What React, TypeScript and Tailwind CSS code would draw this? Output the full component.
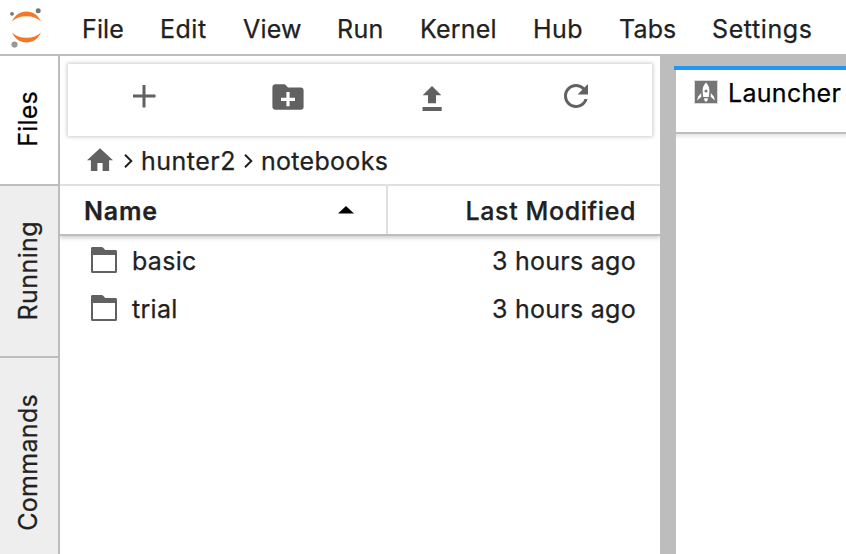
import type { ReactNode } from 'react';

const menus = [
  { label: 'File', cls: 'w-[78px] tracking-[0.15px]' },
  { label: 'Edit', cls: 'w-[83px] tracking-[0.5px]' },
  { label: 'View', cls: 'w-[94px] tracking-[0.2px]' },
  { label: 'Run', cls: 'w-[83px] tracking-[0.3px]' },
  { label: 'Kernel', cls: 'w-[113px] tracking-[0.2px]' },
  { label: 'Hub', cls: 'w-[86px] tracking-[0.4px]' },
  { label: 'Tabs', cls: 'w-[93px] tracking-[0.15px]' },
  { label: 'Settings', cls: 'w-[120px] tracking-[0.6px]' },
];

function Logo() {
  return (
    <svg className="h-[54px] w-[48px]" viewBox="0 0 48 54">
      <path d="M12 21.500C15 15 20 11.500 26.500 11.500S38 15 41 21.500C37.500 18 32.500 16.300 26.500 16.300S15.500 18 12 21.500Z" fill="#f37726" />
      <path d="M12 32.500C15 39 20 42.500 26.500 42.500S38 39 41 32.500C37.500 36 32.500 37.700 26.500 37.700S15.500 36 12 32.500Z" fill="#f37726" />
      <circle cx="38.200" cy="10.700" r="2.500" fill="#767677" />
      <circle cx="12" cy="13.800" r="1.900" fill="#767677" />
      <circle cx="14.500" cy="44.500" r="3.100" fill="#989798" />
    </svg>
  );
}

function ToolButton({ children }: { children: ReactNode }) {
  return <button className="flex h-[72px] w-[144px] items-start justify-center text-[#616161]">{children}</button>;
}

function Chevron() {
  return (
    <svg className="h-[16px] w-[10px] shrink-0" viewBox="0 0 10 16">
      <path d="M2 1.800L8.300 8L2 14.200" fill="none" stroke="#212121" strokeWidth="2" />
    </svg>
  );
}

function FolderIcon() {
  return (
    <svg className="mb-[2px] ml-[30px] h-[28px] w-[28px] shrink-0" viewBox="0 0 28 28">
      <path fillRule="evenodd" fill="#616161" d="M2.500 1H11.500C12.200 1 12.600 1.200 13 1.600L15.200 3.900H25.500C26.400 3.900 27 4.500 27 5.400V25.500C27 26.400 26.400 27 25.500 27H2.500C1.600 27 1 26.400 1 25.500V2.500C1 1.600 1.600 1 2.500 1ZM3 9V25.100H25V9Z" />
    </svg>
  );
}

function FileRow({ name }: { name: string }) {
  return (
    <div className="flex h-[48px] items-center">
      <FolderIcon />
      <span className="ml-[14px] tracking-[0.3px]">{name}</span>
      <span className="mr-[24px] ml-auto tracking-[0.28px]">3 hours ago</span>
    </div>
  );
}

function SideTab({ label, cls }: { label: string; cls: string }) {
  return (
    <div className={'flex w-[58px] items-center justify-center border-b-2 border-[#bdbdbd] pr-[3px] ' + cls}>
      <span className="rotate-180 [writing-mode:vertical-rl]">{label}</span>
    </div>
  );
}

export default function App() {
  return (
    <div className="flex h-[554px] w-[846px] flex-col overflow-hidden bg-white font-['Inter','Liberation_Sans',sans-serif] text-[25px] leading-[32px] whitespace-nowrap text-[#212121] [-webkit-text-stroke:0.25px_currentColor]">
      <header className="flex h-[56px] shrink-0 border-b-2 border-[#bdbdbd]">
        <Logo />
        <nav className="ml-[34px] flex pt-[13px]">
          {menus.map((m) => (
            <span key={m.label} className={'shrink-0 ' + m.cls}>{m.label}</span>
          ))}
        </nav>
      </header>

      <div className="flex min-h-0 flex-1">
        <aside className="w-[60px] shrink-0 border-r-2 border-[#bdbdbd] bg-[#eeeeee]">
          <SideTab label="Files" cls="h-[130px] bg-white pb-[2px] text-black tracking-[0.2px]" />
          <SideTab label="Running" cls="h-[172px] tracking-[0.4px]" />
          <SideTab label="Commands" cls="h-[211px] tracking-[0.3px]" />
        </aside>

        <section className="flex w-[600px] shrink-0 flex-col bg-white">
          <div className="mx-[8px] mt-[8px] flex h-[72px] w-[584px] shrink-0 pl-[4px] shadow-[0_0_4px_1px_rgba(0,0,0,0.2)]">
            <ToolButton>
              <svg className="mt-[13px] h-[38px] w-[38px]" viewBox="0 0 38 38">
                <path d="M8 19H30.500M19 8V30.500" stroke="currentColor" strokeWidth="3" />
              </svg>
            </ToolButton>
            <ToolButton>
              <svg className="mt-[17px] h-[32px] w-[32px]" viewBox="0 0 32 32">
                <path fill="currentColor" fillRule="evenodd" d="M3.200 3.300H12.800L16 6.500H28.800C30.600 6.500 31.600 7.900 31.600 9.300V26C31.600 27.700 30.600 28.700 28.800 28.700H3.200C1.600 28.700 .4 27.400 .4 26V6.200C.4 4.700 1.600 3.300 3.200 3.300ZM14.400 11V16.700H9V19.900H14.400V25.200H17.600V19.900H23V16.700H17.600V11Z" />
              </svg>
            </ToolButton>
            <ToolButton>
              <svg className="mt-[20px] h-[30px] w-[30px]" viewBox="0 0 30 30">
                <path fill="currentColor" d="M15 2L24.300 11.300H19V19.300H11V11.300H5.700ZM5.500 23H24.700V27H5.500Z" />
              </svg>
            </ToolButton>
            <ToolButton>
              <svg className="mt-[14px] h-[36px] w-[36px]" viewBox="0 0 24 24">
                <path fill="currentColor" d="M17.650 6.350C16.200 4.900 14.210 4 12 4c-4.420 0-7.990 3.580-7.990 8s3.570 8 7.990 8c3.730 0 6.840-2.550 7.730-6h-2.080c-.82 2.330-3.040 4-5.650 4-3.310 0-6-2.690-6-6s2.690-6 6-6c1.660 0 3.140.69 4.220 1.780L13 11h7V4l-2.350 2.350z" />
              </svg>
            </ToolButton>
          </div>

          <div className="flex h-[48px] shrink-0 items-center pt-[2px]">
            <svg className="mb-[2px] ml-[26px] h-[26px] w-[28px] shrink-0" viewBox="0 0 28 26">
              <path fill="#616161" d="M14 1.200L1 13.200H4.900V24H11.400V16H16.600V24H23.100V13.200H27Z" />
            </svg>
            <span className="ml-[9px] flex"><Chevron /></span>
            <span className="ml-[8px] w-[95px] tracking-[0.5px]">hunter2</span>
            <span className="ml-[7px] flex"><Chevron /></span>
            <span className="ml-[8px] tracking-[0.3px]">notebooks</span>
          </div>

          <div className="relative flex h-[52px] shrink-0 border-t-2 border-b-2 border-t-[#e0e0e0] border-b-[#bdbdbd] font-medium shadow-[0_2px_4px_rgba(0,0,0,0.2)] [clip-path:inset(0_0_-8px_0)]">
            <div className="flex w-[328px] items-center border-r-2 border-[#e0e0e0]">
              <span className="ml-[24px] pt-[2px] font-semibold tracking-[0.8px]">Name</span>
              <svg className="mr-[32px] ml-auto h-[8px] w-[16px]" viewBox="0 0 16 8">
                <path d="M0 7.500L8 0L16 7.500Z" fill="#000" />
              </svg>
            </div>
            <div className="flex flex-1 items-center justify-end pt-[2px] pr-[24px]">
              <span className="tracking-[0.6px]">Last Modified</span>
            </div>
          </div>
          <div className="pt-px">
            <FileRow name="basic" />
            <FileRow name="trial" />
          </div>
        </section>

        <main className="flex flex-1 bg-[#bdbdbd] pt-[10px] pl-[14px]">
          <div className="flex flex-1 flex-col border-t-4 border-[#2196f3]">
            <div className="ml-[2px] flex h-[64px] shrink-0 border-b-2 border-[#bdbdbd] bg-white pt-[7px] pl-[18px] text-black">
              <svg className="mt-[3px] h-[24px] w-[24px] shrink-0" viewBox="0 0 24 24">
                <rect x=".5" y=".5" width="23" height="23" fill="#757575" stroke="#d8d8d8" />
                <path fillRule="evenodd" fill="#fff" d="M12 2.500C9.500 5 8.500 8 8.600 11L9.200 17H14.800L15.400 11C15.500 8 14.500 5 12 2.500ZM12 9.500A1.500 1.500 0 1 1 12 12.500A1.500 1.500 0 0 1 12 9.500Z" />
                <path fill="#fff" d="M7.200 13L4.200 16.500L3 20.500L7.400 16.800ZM16.800 13L19.800 16.500L21 20.500L16.600 16.800ZM10 18.300H14L13.500 20.500L12 22L10.500 20.500Z" />
              </svg>
              <span className="ml-[10px] tracking-[0.3px]">Launcher</span>
            </div>
            <div className="ml-[2px] flex-1 bg-white bg-[linear-gradient(to_bottom,#e6e6e6,#ffffff_5px)]" />
          </div>
        </main>
      </div>
    </div>
  );
}
